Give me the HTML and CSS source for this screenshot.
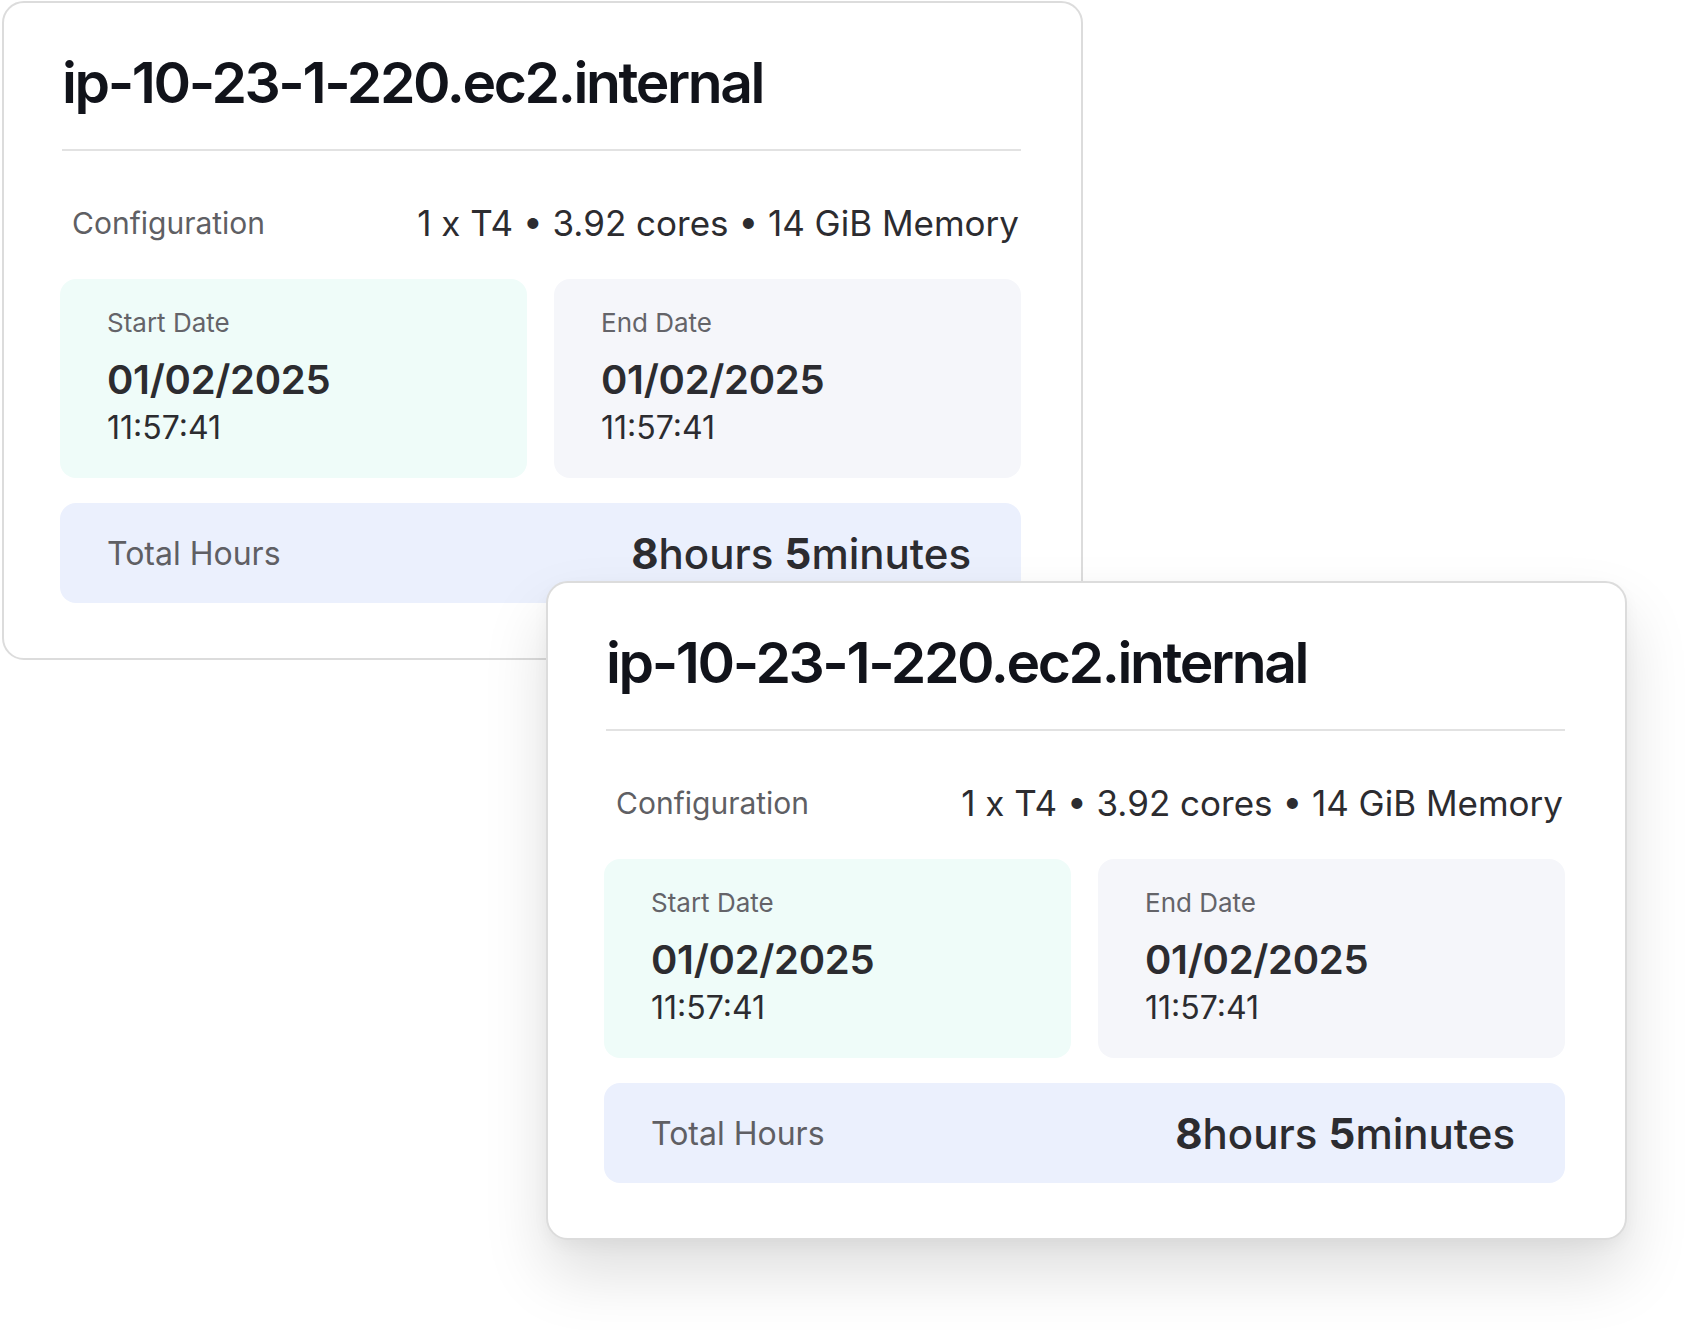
FILE: index.html
```html
<!DOCTYPE html>
<html>
<head>
	<meta charset="utf-8">
	<title>Instance usage</title>
	<link rel="stylesheet" href="styles.css">
</head>
<body>
<div class="stack">

	<div class="card">
		<div class="host">ip-10-23-1-220.ec2.internal</div>
		<div class="config">
			<span class="config-label">Configuration</span>
			<span class="config-value">1 x T4 &bull; 3.92 cores &bull; 14 GiB Memory</span>
		</div>
		<div class="dates">
			<div class="date start">
				<div class="date-label">Start Date</div>
				<div class="date-day">01/02/2025</div>
				<div class="date-time">11:57:41</div>
			</div>
			<div class="date end">
				<div class="date-label">End Date</div>
				<div class="date-day">01/02/2025</div>
				<div class="date-time">11:57:41</div>
			</div>
		</div>
		<div class="total">
			<span class="total-label">Total Hours</span>
			<span class="total-value"><b>8</b>hours <b>5</b>minutes</span>
		</div>
	</div>

	<div class="card front">
		<div class="host">ip-10-23-1-220.ec2.internal</div>
		<div class="config">
			<span class="config-label">Configuration</span>
			<span class="config-value">1 x T4 &bull; 3.92 cores &bull; 14 GiB Memory</span>
		</div>
		<div class="dates">
			<div class="date start">
				<div class="date-label">Start Date</div>
				<div class="date-day">01/02/2025</div>
				<div class="date-time">11:57:41</div>
			</div>
			<div class="date end">
				<div class="date-label">End Date</div>
				<div class="date-day">01/02/2025</div>
				<div class="date-time">11:57:41</div>
			</div>
		</div>
		<div class="total">
			<span class="total-label">Total Hours</span>
			<span class="total-value"><b>8</b>hours <b>5</b>minutes</span>
		</div>
	</div>

</div>
</body>
</html>
```

FILE: styles.css
```css
html, body {
	min-height:100%;
	}
body {
	margin:0;
	background:#fff;
	font-family:Inter, "Noto Sans", sans-serif;
	color:#2c2c30;
	}
.stack {
	padding:1px 0 92px 2px;
	}
.card {
	width:1081px;
	box-sizing:border-box;
	background:#fff;
	border:2px solid #dcdcdc;
	border-radius:22px;
	padding:45px 60px 55px 56px;
	}
.card.front {
	margin:-79px 0 0 544px;
	position:relative;
	box-shadow:0 34px 64px rgba(0,0,0,0.13), 0 6px 16px rgba(0,0,0,0.04);
	}
.host {
	font-size:57px;
	line-height:70px;
	font-weight:600;
	letter-spacing:-2.4px;
	color:#11131a;
	margin:0 0 0 2px;
	padding-bottom:31px;
	border-bottom:2px solid #e2e2e2;
	}
.config {
	display:flex;
	justify-content:space-between;
	align-items:center;
	padding:52px 2px 36px 12px;
	line-height:40px;
	}
.config-label {
	font-size:30px;
	color:#5f5f64;
	}
.config-value {
	font-size:35px;
	color:#2c2c30;
	}
.dates {
	display:flex;
	gap:27px;
	}
.date {
	flex:1;
	border-radius:16px;
	padding:28px 40px 31px 47px;
	}
.start {
	background:#effcf9;
	}
.end {
	background:#f5f6fa;
	}
.date-label {
	font-size:26px;
	line-height:32px;
	color:#646469;
	}
.date-day {
	font-size:40px;
	line-height:46px;
	font-weight:600;
	letter-spacing:-0.3px;
	margin-top:18px;
	}
.date-time {
	font-size:32px;
	line-height:38px;
	margin-top:6px;
	}
.total {
	margin-top:25px;
	height:100px;
	box-sizing:border-box;
	display:flex;
	justify-content:space-between;
	align-items:center;
	background:#ebf0fd;
	border-radius:16px;
	padding:0 50px 0 47px;
	}
.total-label {
	font-size:32px;
	color:#5f5f64;
	}
.total-value {
	font-size:42px;
	font-weight:500;
	color:#2c2c30;
	}
.total-value b {
	font-weight:650;
	}
```
